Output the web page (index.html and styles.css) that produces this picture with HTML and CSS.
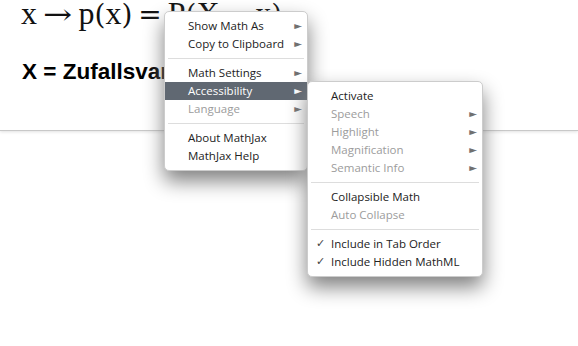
FILE: index.html
```html
<!DOCTYPE html>
<html lang="de">
<head>
<meta charset="utf-8">
<title>MathJax Menü</title>
<link rel="stylesheet" href="styles.css">
</head>
<body>
<div class="card">
  <div class="math">
    <span class="mi">x</span><span class="mo rel arrow-op">→</span><span class="mi">p</span><span class="mo">(</span><span class="mi">x</span><span class="mo">)</span><span class="mo rel">=</span><span class="mi">P</span><span class="mo">(</span><span class="mi">X</span><span class="mo rel">=</span><span class="mi">x</span><span class="mo">)</span>
  </div>
  <p class="def">X = Zufallsvariable</p>
</div>

<div class="menu menu-main">
  <div class="item">Show Math As<span class="arrow">►</span></div>
  <div class="item">Copy to Clipboard<span class="arrow">►</span></div>
  <div class="rule"></div>
  <div class="item">Math Settings<span class="arrow">►</span></div>
  <div class="item focused">Accessibility<span class="arrow">►</span></div>
  <div class="item disabled">Language<span class="arrow">►</span></div>
  <div class="rule"></div>
  <div class="item">About MathJax</div>
  <div class="item">MathJax Help</div>
</div>

<div class="menu menu-sub">
  <div class="item">Activate</div>
  <div class="item disabled">Speech<span class="arrow">►</span></div>
  <div class="item disabled">Highlight<span class="arrow">►</span></div>
  <div class="item disabled">Magnification<span class="arrow">►</span></div>
  <div class="item disabled">Semantic Info<span class="arrow">►</span></div>
  <div class="rule"></div>
  <div class="item">Collapsible Math</div>
  <div class="item disabled">Auto Collapse</div>
  <div class="rule"></div>
  <div class="item"><span class="check">✓</span>Include in Tab Order</div>
  <div class="item"><span class="check">✓</span>Include Hidden MathML</div>
</div>
</body>
</html>
```

FILE: styles.css
```css
html, body {
  margin: 0;
  padding: 0;
  background: #ffffff;
}

body {
  width: 578px;
  height: 346px;
  overflow: hidden;
  position: relative;
}

.card {
  height: 133px;
  padding: 0 0 0 21px;
  box-sizing: border-box;
  border-bottom: 1px solid #c8c8c8;
  box-shadow: 0 1px 3px rgba(0, 0, 0, 0.12);
  background: #fff;
}

.math {
  font-family: "Liberation Serif", "DejaVu Serif", serif;
  font-size: 32px;
  line-height: 30px;
  height: 26px;
  margin-top: -2px;
  color: #111;
  white-space: nowrap;
}

.math span {
  display: inline-block;
}

.math .mo {
  font-family: "DejaVu Serif", "Liberation Serif", serif;
  font-size: 28px;
}

.math .rel {
  margin: 0 6px;
}

.math .arrow-op {
  transform: scaleX(1.25);
  margin: 0 9px;
}

.def {
  margin: 35px 0 0 1px;
  font-family: "Liberation Sans", Arial, sans-serif;
  font-weight: bold;
  font-size: 22.5px;
  line-height: 26px;
  color: #000;
}

.menu {
  position: absolute;
  background: #fff;
  border: 1px solid #cccccc;
  border-radius: 5px;
  box-shadow: 0 10px 20px #808080;
  padding: 5px 0;
  font-family: "Open Sans", "Noto Sans", sans-serif;
  font-size: 11.5px;
  color: #222;
  white-space: nowrap;
}

.menu-main {
  left: 164px;
  top: 11px;
  width: 142px;
}

.menu-sub {
  left: 307px;
  top: 81px;
  width: 174px;
}

.item {
  position: relative;
  height: 18px;
  line-height: 18px;
  padding: 0 0 0 23px;
}

.item.focused {
  background: #606872;
  color: #fff;
}

.item.disabled {
  color: #9c9c9c;
}

.arrow {
  position: absolute;
  right: 5px;
  top: 0;
  font-family: "DejaVu Sans", sans-serif;
  font-size: 10px;
  color: #707070;
}

.item.focused .arrow {
  color: #fff;
}

.check {
  position: absolute;
  left: 8px;
  top: 0;
  font-family: "DejaVu Sans", sans-serif;
  font-size: 11px;
  color: #444;
}

.rule {
  border-top: 1px solid #dddddd;
  margin: 5px 3px;
}
```
